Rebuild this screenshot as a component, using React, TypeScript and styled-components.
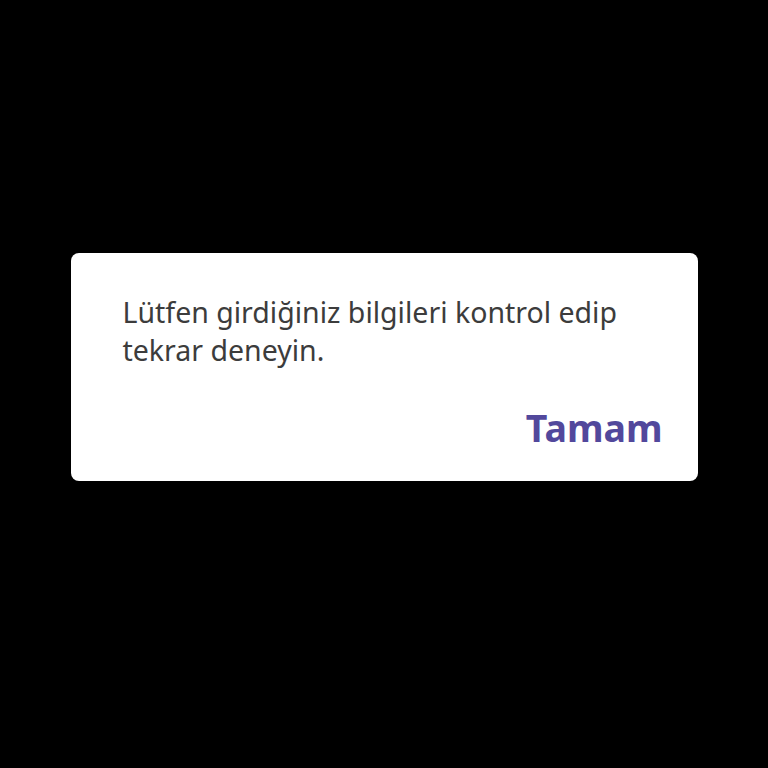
import React from "react";
import styled, { createGlobalStyle } from "styled-components";

const GlobalStyle = createGlobalStyle`
    html, body {
        margin: 0;
        padding: 0;
        background: #000000;
    }
    body {
        font-family: "Noto Sans", "Open Sans", sans-serif;
    }
`;

const Page = styled.div`
    width: 768px;
    height: 768px;
    display: flex;
    justify-content: center;
    align-items: flex-start;
    padding-top: 253px;
    box-sizing: border-box;
`;

const Dialog = styled.div`
    width: 627px;
    height: 228px;
    box-sizing: border-box;
    background: #ffffff;
    border-radius: 8px;
    padding: 40px 35px 0 52px;
    display: flex;
    flex-direction: column;
`;

const Message = styled.p`
    margin: 0;
    font-size: 28.5px;
    line-height: 38px;
    color: #3c3c3c;
    padding-right: 10px;
`;

const Actions = styled.div`
    display: flex;
    justify-content: flex-end;
    margin-top: 36px;
`;

const ActionButton = styled.button`
    border: none;
    background: none;
    padding: 0;
    font-family: inherit;
    font-size: 37.5px;
    font-weight: 700;
    line-height: 46px;
    color: #52489c;
    cursor: pointer;
`;

export default function App(): React.ReactElement {
    return (
        <>
            <GlobalStyle />
            <Page>
                <Dialog>
                    <Message>Lütfen girdiğiniz bilgileri kontrol edip tekrar deneyin.</Message>
                    <Actions>
                        <ActionButton>Tamam</ActionButton>
                    </Actions>
                </Dialog>
            </Page>
        </>
    );
}
